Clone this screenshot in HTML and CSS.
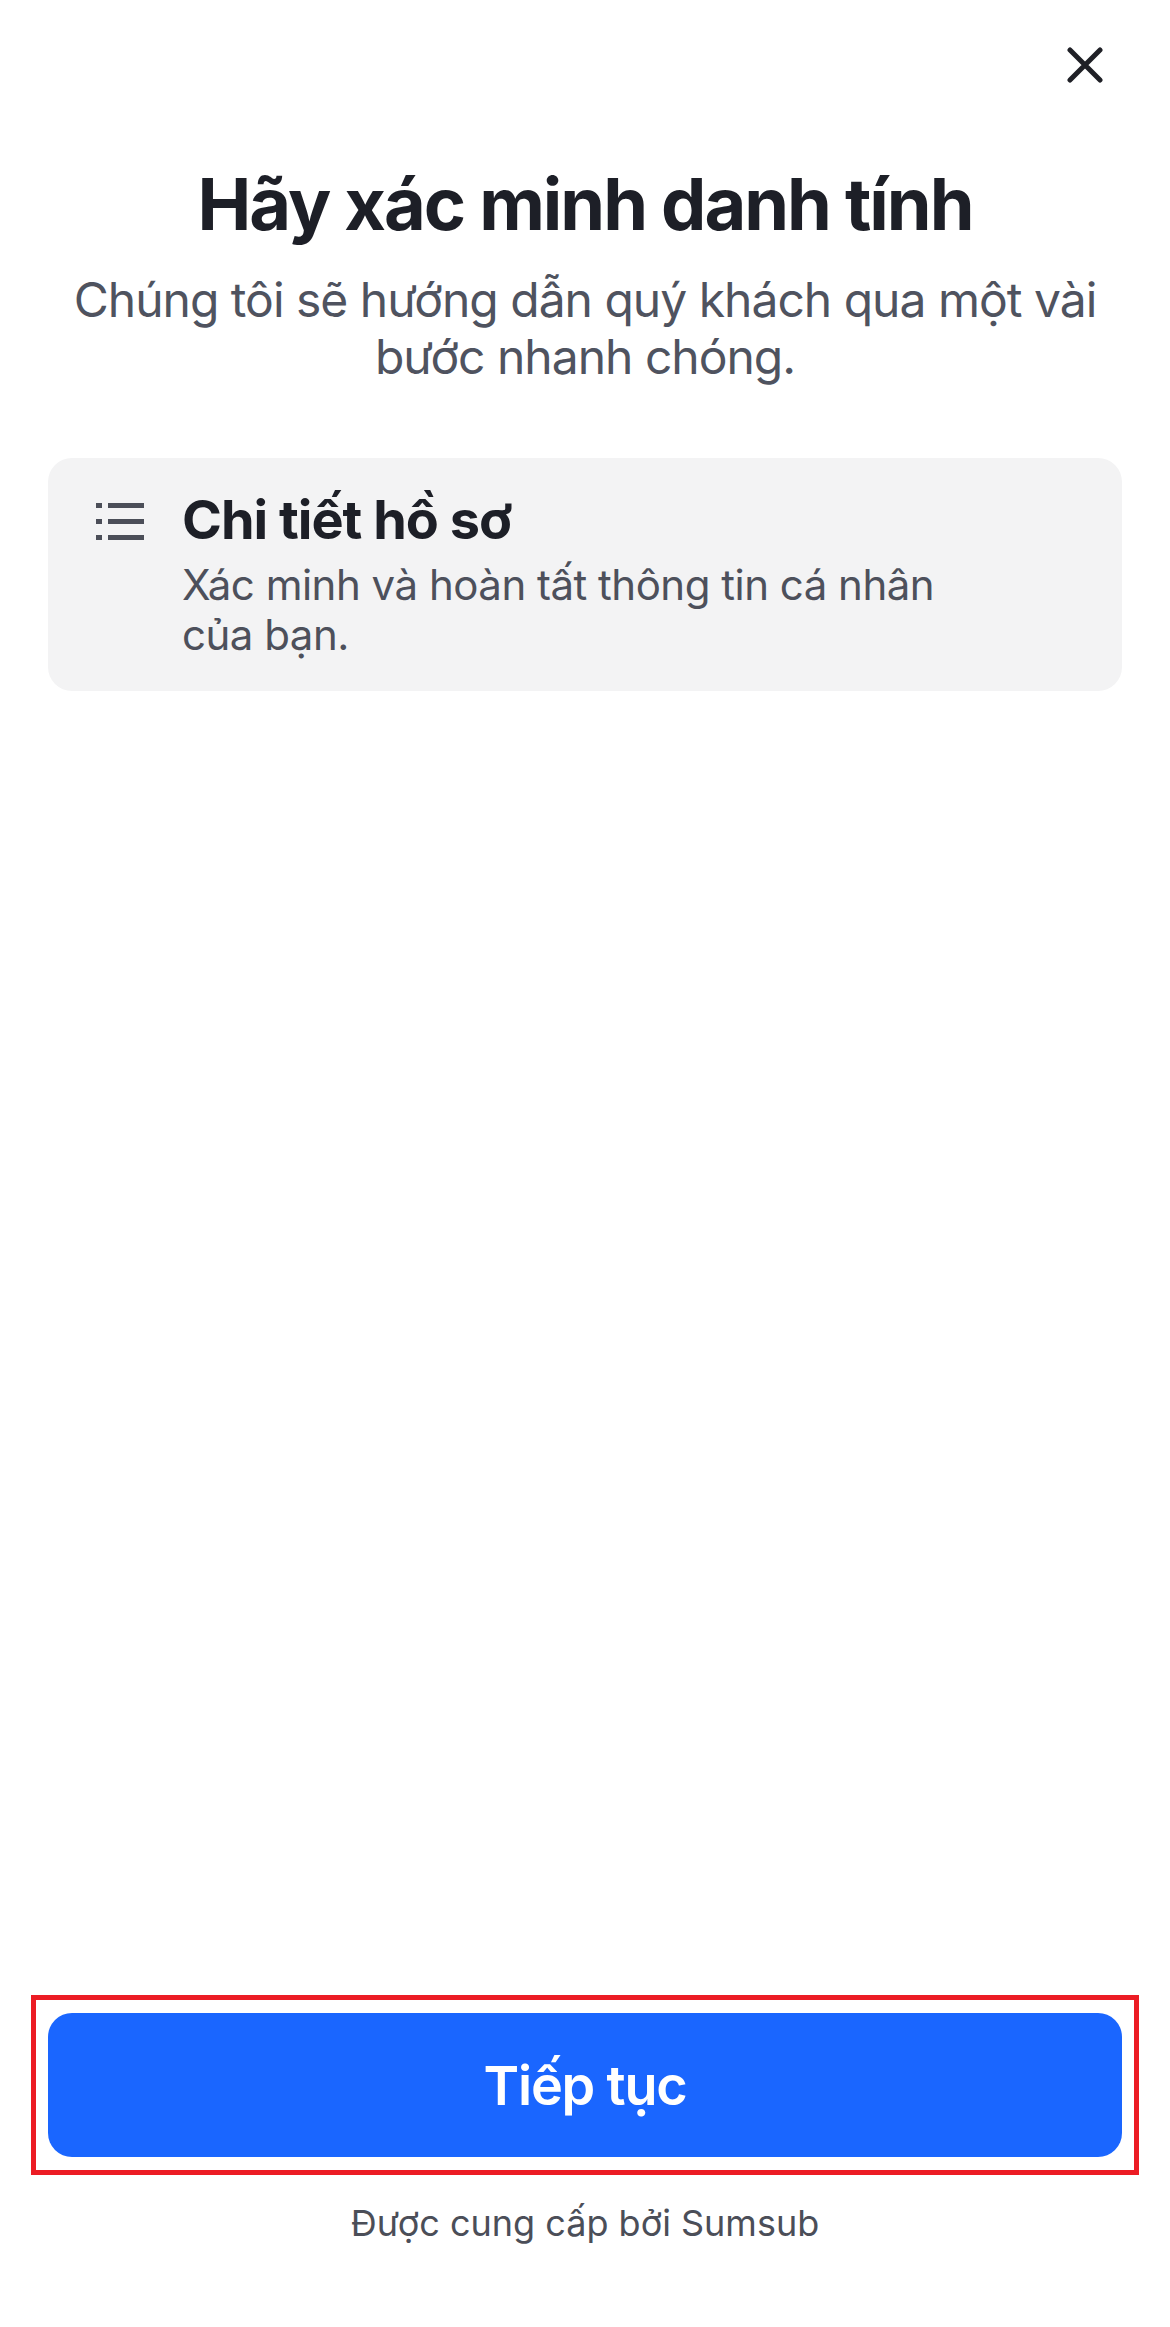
FILE: index.html
```html
<!DOCTYPE html>
<html lang="vi">
<head>
  <meta charset="utf-8">
  <title>Hãy xác minh danh tính</title>
  <link rel="stylesheet" href="styles.css">
</head>
<body>
<div class="page">
  <div class="topbar">
    <button class="close" title="Đóng">
      <svg width="36" height="36" viewBox="0 0 36 36">
        <path d="M3 3 L33 33 M33 3 L3 33" stroke="#1f2026" stroke-width="5" stroke-linecap="round" fill="none"/>
      </svg>
    </button>
  </div>

  <h1 class="title">Hãy xác minh danh tính</h1>
  <p class="subtitle">Chúng tôi sẽ hướng dẫn quý khách qua một vài bước nhanh chóng.</p>

  <div class="card">
    <svg class="card-icon" width="48" height="37" viewBox="0 0 48 37">
      <rect x="0" y="0" width="6" height="5" fill="#4b4e58"/>
      <rect x="12" y="0" width="36" height="5" fill="#4b4e58"/>
      <rect x="0" y="16" width="6" height="5" fill="#4b4e58"/>
      <rect x="12" y="16" width="36" height="5" fill="#4b4e58"/>
      <rect x="0" y="32" width="6" height="5" fill="#4b4e58"/>
      <rect x="12" y="32" width="36" height="5" fill="#4b4e58"/>
    </svg>
    <div class="card-text">
      <h2>Chi tiết hồ sơ</h2>
      <p>Xác minh và hoàn tất thông tin cá nhân của bạn.</p>
    </div>
  </div>

  <div class="spacer"></div>

  <div class="actions">
    <button class="primary">Tiếp tục</button>
  </div>
  <p class="powered">Được cung cấp bởi Sumsub</p>
</div>
</body>
</html>
```

FILE: styles.css
```css
body {
  margin: 0;
  background: #ffffff;
  font-family: "Inter", "Noto Sans", sans-serif;
}

.page {
  min-height: 100vh;
  display: flex;
  flex-direction: column;
  box-sizing: border-box;
  padding-bottom: 82px;
}

.topbar {
  display: flex;
  justify-content: flex-end;
  padding: 47px 67px 0 0;
}

.close {
  background: none;
  border: none;
  padding: 0;
  width: 36px;
  height: 36px;
  cursor: pointer;
}

.close svg {
  display: block;
}

.title {
  margin: 78px 0 0;
  text-align: center;
  font-size: 72px;
  line-height: 86px;
  font-weight: 700;
  color: #1d1f27;
  letter-spacing: -2px;
}

.subtitle {
  margin: 24px 40px 0;
  text-align: center;
  font-size: 48px;
  line-height: 57px;
  color: #4f535f;
  letter-spacing: -1px;
}

.card {
  margin: 73px 48px 0;
  padding: 30px 48px 31px;
  background: #f3f3f4;
  border-radius: 24px;
  display: flex;
  gap: 38px;
}

.card-icon {
  flex-shrink: 0;
  margin-top: 15px;
}

.card-text {
  max-width: 790px;
}

.card-text h2 {
  margin: 0;
  font-size: 54px;
  line-height: 64px;
  font-weight: 700;
  color: #1d1f27;
  letter-spacing: -1px;
}

.card-text p {
  margin: 8px 0 0;
  font-size: 42px;
  line-height: 50px;
  color: #4d505b;
  letter-spacing: -0.5px;
}

.spacer {
  flex: 1;
}

.actions {
  margin: 0 31px;
  border: 5px solid #ec1c24;
  padding: 13px 12px;
}

.primary {
  display: block;
  width: 100%;
  height: 144px;
  border: none;
  border-radius: 24px;
  background: #1a66ff;
  color: #ffffff;
  font-family: "Inter", "Noto Sans", sans-serif;
  font-size: 54px;
  font-weight: 600;
  letter-spacing: -1.2px;
  cursor: pointer;
}

.powered {
  margin: 26px 0 0;
  text-align: center;
  font-size: 36px;
  line-height: 44px;
  color: #4b4e58;
}
```
